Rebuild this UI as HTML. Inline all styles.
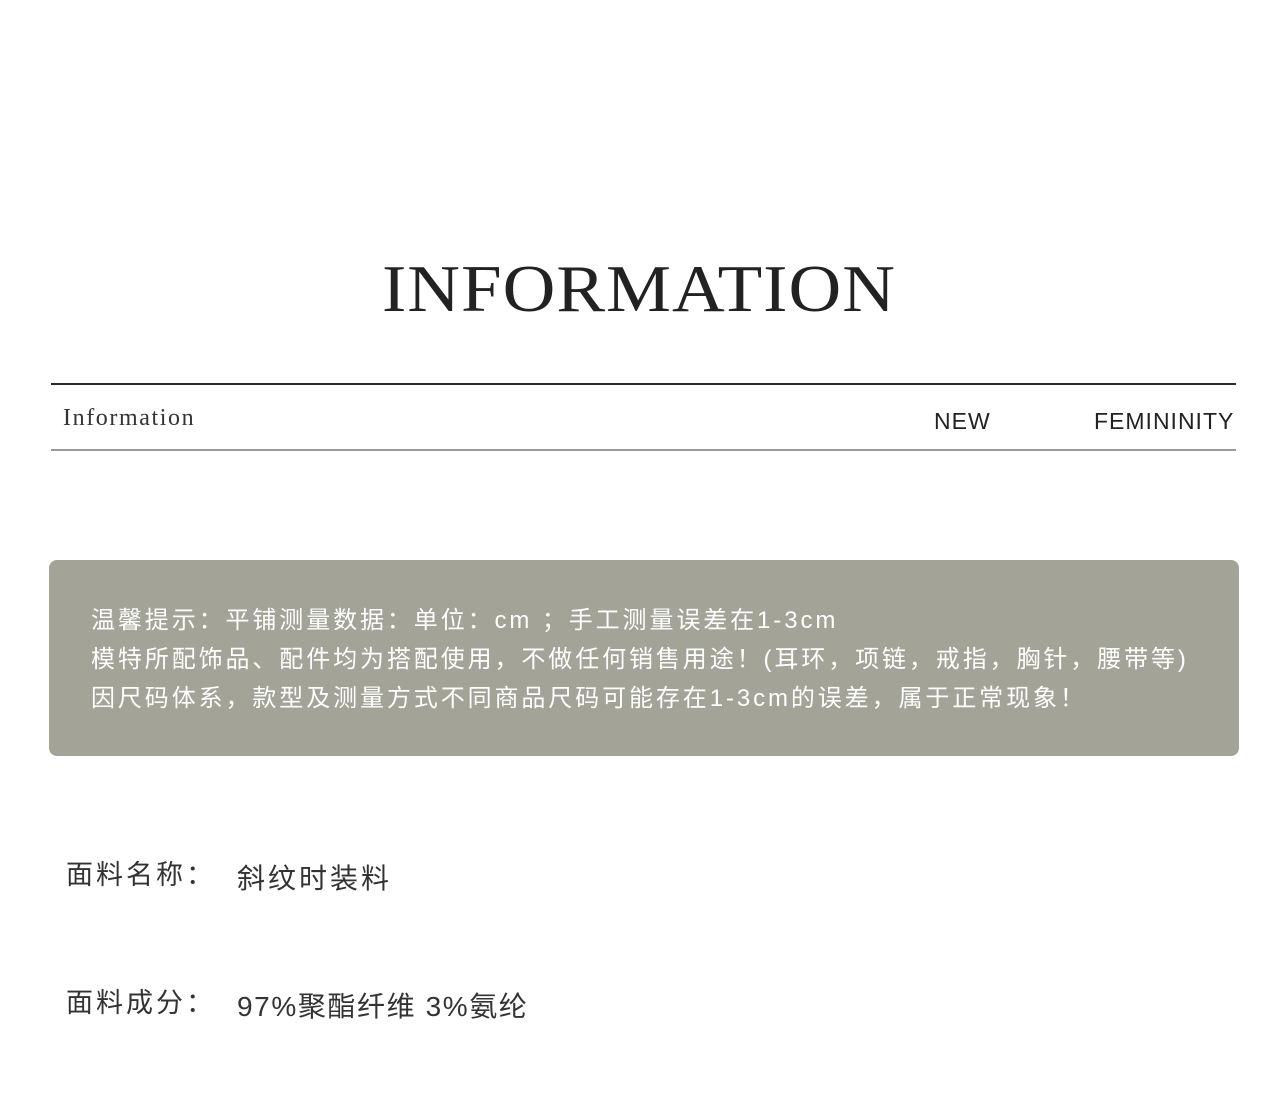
<!DOCTYPE html>
<html><head><meta charset="utf-8"><style>
body{margin:0;width:1280px;height:1096px;background:#fff;position:relative;overflow:hidden;font-family:"Liberation Sans","Noto Sans CJK SC",sans-serif}
.a{position:absolute;white-space:nowrap}
</style></head><body>
<div class="a" style="left:382px;top:254px;font-family:'Liberation Serif',serif;font-size:73px;letter-spacing:1px;color:#222;line-height:76px;transform:scaleY(0.92);transform-origin:0 0">INFORMATION</div>
<div class="a" style="left:51px;top:383px;width:1185px;height:2px;background:#2a2a2a"></div>
<div class="a" style="left:51px;top:449px;width:1185px;height:2px;background:#9a9a9a"></div>
<div class="a" style="left:63px;top:405px;font-family:'Liberation Serif',serif;font-size:24px;letter-spacing:1.6px;color:#333">Information</div>
<div class="a" style="left:934px;top:408px;font-size:23px;color:#222;letter-spacing:1px">NEW</div>
<div class="a" style="left:1094px;top:408px;font-size:23px;color:#222;letter-spacing:1px">FEMININITY</div>
<div class="a" style="left:49px;top:560px;width:1190px;height:196px;background:#a3a397;border-radius:8px"></div>
<div class="a" style="left:91px;top:601px;font-size:24px;line-height:39px;color:#fff;letter-spacing:2.9px">温馨提示：平铺测量数据：单位：cm ；手工测量误差在1-3cm<br>模特所配饰品、配件均为搭配使用，不做任何销售用途！(耳环，项链，戒指，胸针，腰带等)<br>因尺码体系，款型及测量方式不同商品尺码可能存在1-3cm的误差，属于正常现象！</div>
<div class="a" style="left:66px;top:853px;font-size:27px;color:#333;letter-spacing:3px">面料名称：</div>
<div class="a" style="left:237px;top:857px;font-size:28px;color:#333;letter-spacing:3px">斜纹时装料</div>
<div class="a" style="left:66px;top:981px;font-size:27px;color:#333;letter-spacing:3px">面料成分：</div>
<div class="a" style="left:237px;top:985px;font-size:28px;color:#333;letter-spacing:1.6px">97%聚酯纤维 3%氨纶</div>
</body></html>
